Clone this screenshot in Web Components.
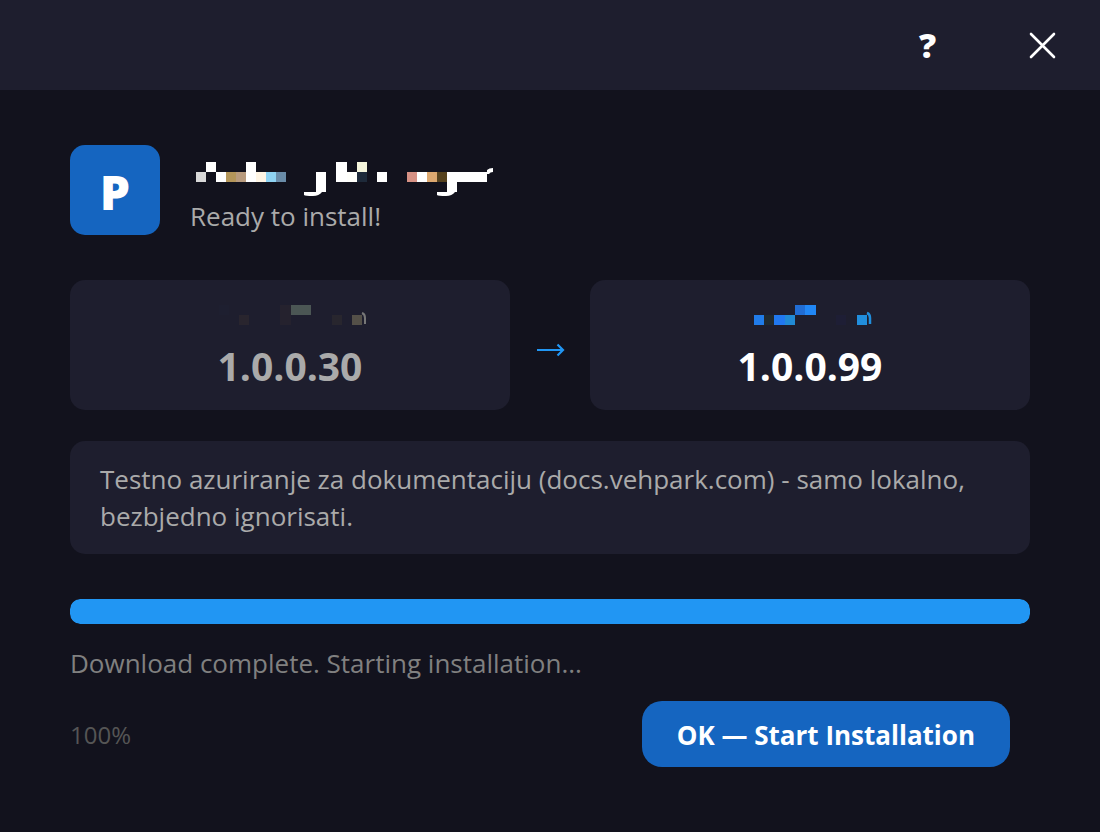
<!DOCTYPE html>
<html lang="en">
<head>
<meta charset="utf-8">
<title>Update</title>
<style>
html { min-height: 100%; background: #12121d; }
body { margin: 0; background: #12121d; color: #aaa; font-family: "Open Sans", "Noto Sans", sans-serif; font-size: 26px; line-height: 37px; }
</style>
</head>
<body>
<update-window></update-window>
<script>
const define = (name, markup) => {
  const t = document.createElement("template");
  t.innerHTML = markup;
  customElements.define(name, class extends HTMLElement {
    constructor() {
      super();
      this.attachShadow({ mode: "open" }).append(t.content.cloneNode(true));
    }
  });
};

define("title-bar", `
<style>
:host { display: flex; justify-content: flex-end; height: 90px; background: #1e1e2e; }
button { width: 115px; border: 0; padding: 0; background: none; color: #fff; font: 800 34px/92px "Open Sans", sans-serif; display: flex; align-items: center; justify-content: center; }
</style>
<button type="button" aria-label="Help">?</button>
<button type="button" aria-label="Close"><svg width="28" height="28" viewBox="0 0 28 28"><path d="M2 3L25 26M25 3L2 26" stroke="#fff" stroke-width="2.6" stroke-linecap="round"/></svg></button>`);

define("app-logo", `
<style>
:host { display: flex; align-items: center; justify-content: center; box-sizing: border-box; width: 90px; height: 90px; padding-top: 4px; border-radius: 15px; background: #1565c0; color: #fff; font-family: "Noto Sans", "Open Sans", sans-serif; font-size: 48px; font-weight: 900; line-height: 90px; flex: none; }
</style>
<slot></slot>`);

define("app-heading", `
<style>
:host { display: flex; gap: 30px; align-items: flex-end; }
.text { display: flex; flex-direction: column; }
svg { display: block; }
</style>
<app-logo>P</app-logo>
<div class="text">
  <svg width="310" height="40" viewBox="190 158 310 40" shape-rendering="crispEdges" role="img" aria-label="Redacted name">
    <g fill="#fff">
      <path d="M206 162h10v10h-10zM246 162h10v20h-10zM336 162h11v20h-11zM216 172h10v10h-10zM316 172h10v20h-10zM377 172h10v10h-10zM417 172h10v10h-10zM447 172h40v10h-30v10h-10z"/>
      <path shape-rendering="auto" d="M304 192h18q-3 4-9 4q-8 0-9-1zM437 192h18q-3 4-9 4q-8 0-9-1zM487 174v-4q2-2 6-2v4q-3 0-4 2z"/>
    </g>
    <path fill="#d8d8d8" d="M196 172h10v10h-10z"/><path fill="#b4965a" d="M226 172h10v10h-10z"/>
    <path fill="#b89b7e" d="M236 172h10v10h-10z"/><path fill="#fff5e4" d="M256 172h10v10h-10z"/>
    <path fill="#8fd3f2" d="M266 172h10v10h-10z"/><path fill="#6a8ca8" d="M276 172h10v10h-10z"/>
    <path fill="#f5f5dc" d="M357 162h10v10h-10z"/><path fill="#fefefa" d="M347 172h10v10h-10z"/>
    <path fill="#1e2a3a" d="M357 172h10v10h-10z"/><path fill="#d69184" d="M407 172h10v10h-10z"/>
    <path fill="#dca870" d="M427 172h10v10h-10z"/><path fill="#56421e" d="M437 172h10v10h-10z"/>
  </svg>
  <slot></slot>
</div>`);

define("version-card", `
<style>
:host { display: flex; flex-direction: column; align-items: center; flex: 1; box-sizing: border-box; height: 130px; padding-top: 20px; border-radius: 15px; background: #1e1e2e; font-size: 39px; font-weight: bold; line-height: 50px; }
::slotted(svg) { display: block; margin-bottom: 11px; }
</style>
<slot name="label"></slot><slot></slot>`);

define("version-row", `
<style>
:host { display: flex; align-items: center; margin-top: 45px; color: #aaa; }
.arrow { width: 80px; display: flex; justify-content: center; padding-top: 10px; }
.new { color: #fff; }
</style>
<version-card>
  <svg slot="label" width="180" height="30" viewBox="200 300 180 30" shape-rendering="crispEdges">
    <path fill="#1e1f30" d="M219 305h10v10h-10z"/><path fill="#29252e" d="M239 315h10v10h-10z"/>
    <path fill="#25222e" d="M280 305h11v20h-11z"/><path fill="#4b5654" d="M291 305h20v10h-20z"/>
    <path fill="#28262e" d="M332 315h10v10h-10z"/><path fill="#545048" d="M352 315h10v10h-10z"/>
    <path fill="none" stroke="#777" stroke-width="2" shape-rendering="auto" d="M362 313q3 1 3 5v6"/>
  </svg>
  1.0.0.30
</version-card>
<div class="arrow"><svg width="30" height="16" viewBox="0 0 30 16"><path d="M2 8H28M22.500 2.500L28 8L22.500 13.500" fill="none" stroke="#2196f3" stroke-width="2.200"/></svg></div>
<version-card class="new">
  <svg slot="label" width="180" height="30" viewBox="720 300 180 30" shape-rendering="crispEdges">
    <path fill="#217cea" d="M754 315h10v10h-10z"/><path fill="#202a30" d="M764 315h10v10h-10z"/>
    <path fill="#2178f0" d="M774 315h11v10h-11z"/><path fill="#218ad4" d="M785 315h10v10h-10z"/>
    <path fill="#216dd4" d="M795 305h10v10h-10z"/><path fill="#2187f5" d="M805 305h11v10h-11z"/>
    <path fill="#1e1e35" d="M836 315h10v10h-10z"/><path fill="#218edc" d="M857 315h10v10h-10z"/>
    <path fill="none" stroke="#218edc" stroke-width="2.500" shape-rendering="auto" d="M867 313q3 1 3 5v6"/>
  </svg>
  1.0.0.99
</version-card>`);

define("release-note", `
<style>
:host { display: block; margin-top: 31px; padding: 20px 30px 19px; border-radius: 15px; background: #1e1e2e; }
</style>
<slot></slot>`);

define("download-status", `
<style>
:host { display: block; margin-top: 45px; color: #808080; }
progress { display: block; appearance: none; -webkit-appearance: none; width: 100%; height: 25px; border: 0; border-radius: 10px; overflow: hidden; background: #1e1e2e; }
progress::-webkit-progress-bar { background: #1e1e2e; }
progress::-webkit-progress-value { background: #2196f3; border-radius: 10px; }
label { display: block; margin-top: 21px; }
</style>
<progress id="p" max="100" value="100"></progress>
<label for="p"><slot></slot></label>`);

define("action-row", `
<style>
:host { display: flex; align-items: center; justify-content: space-between; margin-top: 19px; padding-right: 20px; color: #555; font-size: 24px; }
button { border: 0; border-radius: 20px; padding: 0 35px; height: 66px; background: #1565c0; color: #fff; font: bold 26px/68px "Open Sans", sans-serif; }
</style>
<slot></slot><button type="button">OK — Start Installation</button>`);

define("update-window", `
<style>
:host { display: block; }
main { padding: 55px 70px; }
</style>
<title-bar></title-bar>
<main>
  <app-heading>Ready to install!</app-heading>
  <version-row></version-row>
  <release-note>Testno azuriranje za dokumentaciju (docs.vehpark.com) - samo lokalno, bezbjedno ignorisati.</release-note>
  <download-status>Download complete. Starting installation...</download-status>
  <action-row>100%</action-row>
</main>`);
</script>
</body>
</html>
